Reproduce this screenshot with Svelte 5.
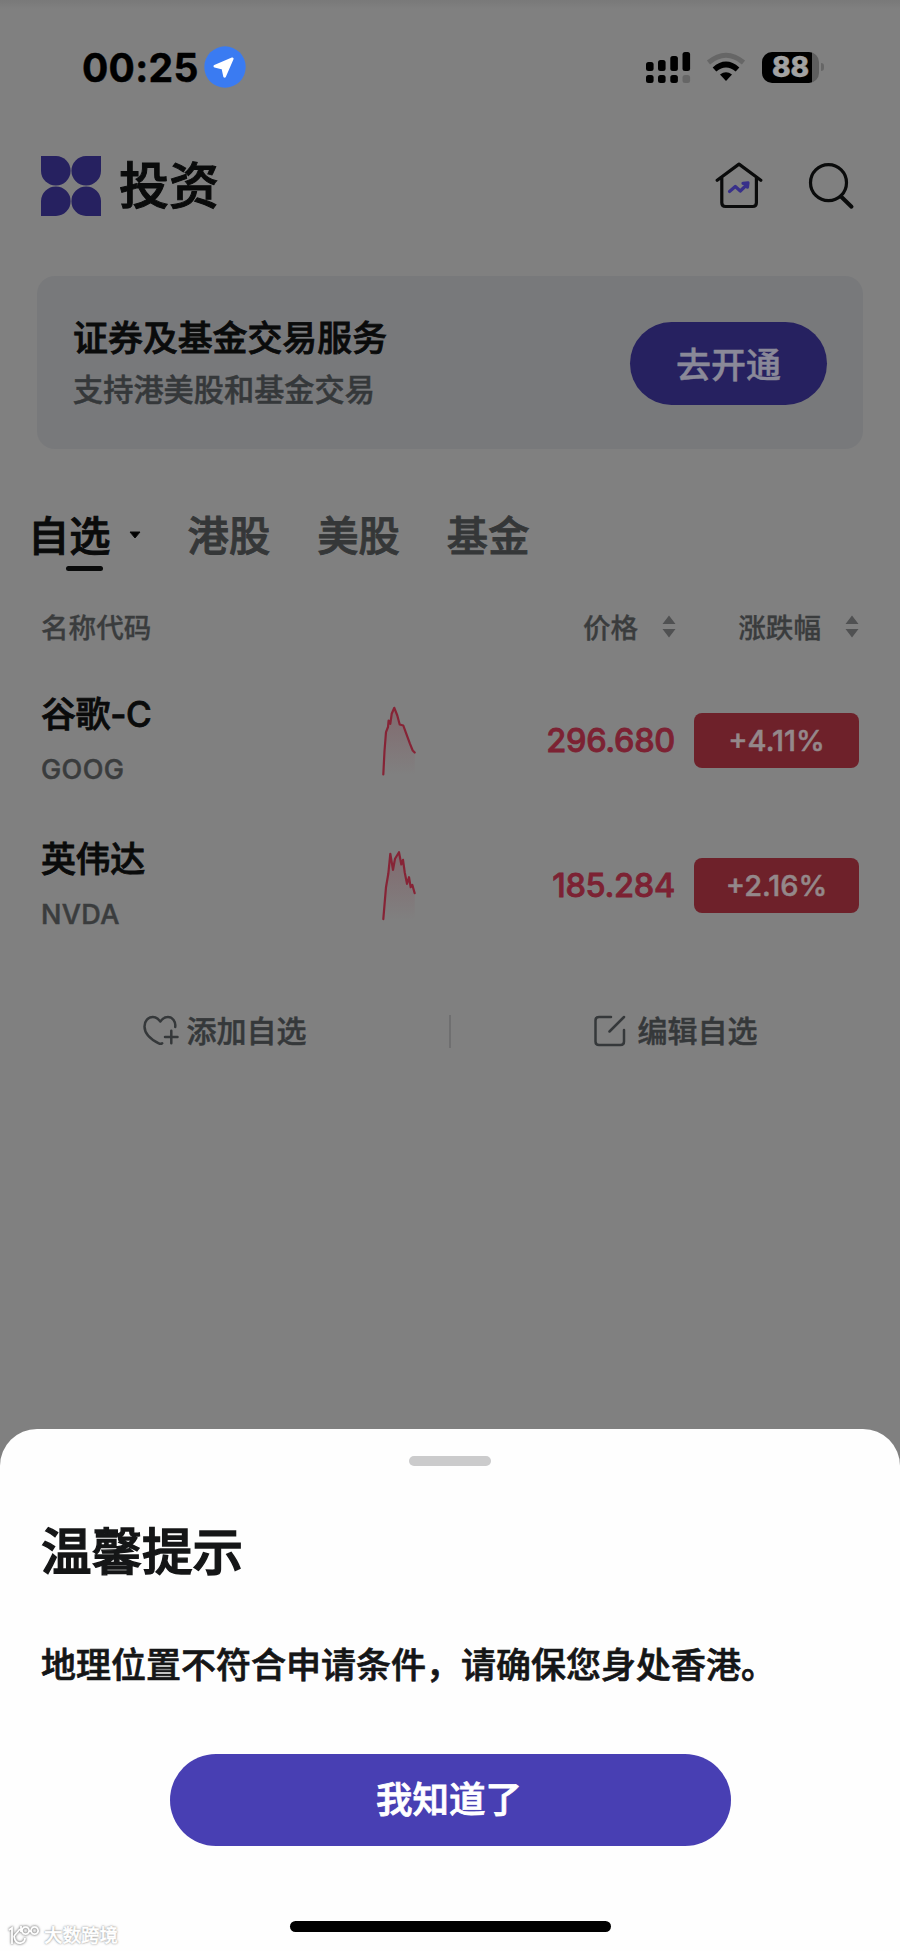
<script lang="ts">
	interface Stock {
		name: string;
		code: string;
		price: string;
		change: string;
		points: string;
	}

	const tabs = ['自选', '港股', '美股', '基金'];

	const stocks: Stock[] = [
		{
			name: '谷歌-C',
			code: 'GOOG',
			price: '296.680',
			change: '+4.11%',
			points:
				'3.3,73.5 4.5,50 6,31.2 8,26 8.6,19.5 10.3,22.8 11.7,12.8 14.3,6.8 17.3,14.5 19.7,23.5 23.3,24.5 25.7,31.2 30,42.8 32.7,49.5 34.7,51.5'
		},
		{
			name: '英伟达',
			code: 'NVDA',
			price: '185.284',
			change: '+2.16%',
			points:
				'3.3,73.2 6,41.2 8.3,27.8 10.3,7.8 13,23.8 15,12.8 19,6.2 21.3,18.5 23,13.8 24.7,26.2 27,37.8 29,31.2 30.7,41.2 32.3,38.8 34.7,47.2'
		}
	];

	let activeTab = $state('自选');
	let sheetOpen = $state(true);

	const closeSheet = () => {
		sheetOpen = false;
	};
</script>

{#snippet sorter()}
	<svg class="sorter" width="14" height="23" viewBox="0 0 14 23">
		<path d="M7 0.5L13.5 9H0.5z M7 22.5L13.5 14H0.5z" />
	</svg>
{/snippet}

<div class="phone">
	<div class="status-bar">
		<span class="time">00:25</span>
		<svg class="location" width="42" height="42" viewBox="0 0 42 42">
			<circle cx="21" cy="21" r="20.7" fill="#3a7bf2" />
			<path
				d="M10.8 20.3L28.3 12.8L20.6 30.4L18.8 22.3z"
				fill="#fff"
				stroke="#fff"
				stroke-width="2.6"
				stroke-linejoin="round"
			/>
		</svg>
		<div class="indicators">
			<svg width="46" height="34" viewBox="0 0 46 34">
				<rect x="1" y="12" width="7.6" height="9" rx="2.5" />
				<rect x="13" y="10" width="7.6" height="11" rx="2.5" />
				<rect x="25.3" y="6" width="7.6" height="15" rx="2.5" />
				<rect x="37.5" y="2" width="7.6" height="19" rx="2.5" />
				<rect x="1" y="25" width="7.6" height="8" rx="2.5" />
				<rect x="13" y="25" width="7.6" height="8" rx="2.5" />
				<rect x="25.3" y="25" width="7.6" height="8" rx="2.5" />
				<rect x="37.5" y="25" width="7.6" height="8" rx="2.5" fill="#666" />
			</svg>
			<svg class="wifi" width="40" height="30" viewBox="0 0 40 30">
				<path d="M2.5 10.5Q20 -4 37.5 10.5" fill="none" stroke="#666" stroke-width="5" />
				<path d="M8.5 17.5Q20 7.5 31.5 17.5" fill="none" stroke="#000" stroke-width="5.6" />
				<path d="M14 22.6Q20 17.8 26 22.6L20 29z" />
			</svg>
			<div class="battery"><span>88</span></div>
			<div class="battery-tip"></div>
		</div>
	</div>

	<header class="header">
		<svg class="logo" width="60" height="60" viewBox="0 0 60 60">
			<path d="M0 0H15A14.8 14.8 0 1 1 0 15z" />
			<path d="M60 0H45A14.8 14.8 0 1 0 60 15z" />
			<path d="M0 60H15A14.8 14.8 0 1 0 0 45z" />
			<path d="M60 60H45A14.8 14.8 0 1 1 60 45z" />
		</svg>
		<h1>投资</h1>
		<svg class="line-icon home" width="48" height="48" viewBox="0 0 48 48">
			<path d="M2.2 18.3L24 2.1L45.8 18.3M6.8 15.5V40.7Q6.8 44.5 10.6 44.5H37.6Q41.4 44.5 41.4 40.7V15.5" />
			<path class="trend" d="M14.5 29.5L20.3 24.5L25.3 29L32 22.5M28 21.3L33 20.8L32.4 25.2" />
		</svg>
		<svg class="line-icon" width="48" height="48" viewBox="0 0 48 48">
			<circle cx="21.5" cy="20.7" r="18" />
			<path d="M34 34.5L44.5 44.7" stroke-width="4" />
		</svg>
	</header>

	<section class="banner">
		<div>
			<h2>证券及基金交易服务</h2>
			<p>支持港美股和基金交易</p>
		</div>
		<button class="open-btn">去开通</button>
	</section>

	<nav class="tabs">
		{#each tabs as tab, i}
			<button class="tab" class:active={tab === activeTab} onclick={() => (activeTab = tab)}>
				{tab}
				{#if i === 0}
					<svg class="caret" width="12" height="8" viewBox="0 0 12 8">
						<path d="M1 1H11L6 7z" stroke="#0a0b0b" stroke-linejoin="round" />
					</svg>
				{/if}
			</button>
		{/each}
	</nav>

	<div class="table-head">
		<span class="col-name">名称代码</span>
		<span class="col-price">价格</span>{@render sorter()}
		<span class="col-change">涨跌幅</span>{@render sorter()}
	</div>

	{#each stocks as stock}
		<div class="stock">
			<div class="stock-name">
				<strong>{stock.name}</strong>
				<span>{stock.code}</span>
			</div>
			<svg class="spark" width="40" height="80" viewBox="0 0 40 80">
				<defs>
					<linearGradient id="fade-{stock.code}" x1="0" y1="0" x2="0" y2="1">
						<stop offset="0" stop-color="#862436" stop-opacity="0.24" />
						<stop offset="1" stop-color="#862436" stop-opacity="0" />
					</linearGradient>
				</defs>
				<polygon points="{stock.points} 34.7,74 3.3,74" fill="url(#fade-{stock.code})" />
				<polyline points={stock.points} />
			</svg>
			<span class="price">{stock.price}</span>
			<span class="change">{stock.change}</span>
		</div>
	{/each}

	<div class="actions">
		<button class="action">
			<svg width="36" height="32" viewBox="0 0 36 32">
				<path
					d="M32.2 12C33 6.5 29.5 2 25 2C21.5 2 19 4 17.3 6.5C15 3.5 12.5 2 9.8 2C5.2 2 1.5 6 1.5 11.5C1.5 19.5 9 25 15.8 28.4Q17.8 29.4 19.2 28.2"
				/>
				<path d="M22 22H34.5M28.3 15.8V28.2" />
			</svg>
			<span>添加自选</span>
		</button>
		<div class="divider"></div>
		<button class="action edit">
			<svg width="32" height="32" viewBox="0 0 32 32">
				<path d="M17 2H5Q1.5 2 1.5 5.5V26.5Q1.5 30 5 30H26.5Q30 30 30 26.5V15M30 2L15.5 16.5" />
			</svg>
			<span>编辑自选</span>
		</button>
	</div>

	{#if sheetOpen}
		<div class="sheet" role="dialog" aria-modal="true">
			<div class="handle"></div>
			<h2>温馨提示</h2>
			<p>地理位置不符合申请条件，请确保您身处香港。</p>
			<button class="confirm" onclick={closeSheet}>我知道了</button>
			<div class="home-indicator"></div>
			<div class="watermark">
				<svg width="34" height="22" viewBox="0 0 34 22">
					<path
						d="M2 6L5 4V20M13 5L7 12M7 12Q8 20 14 19Q18 18 18 14M14 2V8M18.5 3A3.6 3.6 0 1 0 18.6 3M27.5 3A3.6 3.6 0 1 0 27.6 3"
					/>
				</svg>
				<span>大数跨境</span>
			</div>
		</div>
	{/if}
</div>

<style>
	:global(body) {
		margin: 0;
		background: #808080;
	}

	.phone {
		position: relative;
		box-sizing: border-box;
		width: 900px;
		height: 1951px;
		overflow: hidden;
		background: linear-gradient(#797979, #7b7b7b 3px, #808080 9px);
		font-family: Inter, 'Noto Sans CJK SC', sans-serif;
		font-weight: 500;
		color: #0a0b0b;
		-webkit-text-stroke: 0.5px currentColor;
	}

	h1,
	h2,
	p {
		margin: 0;
		font-weight: 500;
	}

	button {
		padding: 0;
		border: none;
		background: none;
		font: inherit;
		color: inherit;
		cursor: pointer;
	}

	svg {
		flex-shrink: 0;
	}

	.status-bar {
		display: flex;
		align-items: center;
		height: 134px;
		padding: 0 76px 0 82px;
		color: #000;
	}

	.time {
		width: 122px;
		font-size: 39px;
		font-weight: 700;
		letter-spacing: 0.3px;
	}

	.indicators {
		display: flex;
		align-items: center;
		margin-left: auto;
	}

	.wifi {
		margin: 0 16px 0 15px;
	}

	.battery {
		display: flex;
		align-items: center;
		justify-content: center;
		width: 57px;
		height: 31px;
		border-radius: 10px;
		background: linear-gradient(90deg, #000 50px, #5e5e5e 50px);
	}

	.battery span {
		font-size: 28px;
		font-weight: 800;
		line-height: 31px;
		color: #a2a2a2;
	}

	.battery-tip {
		width: 3px;
		height: 8px;
		margin-left: 2px;
		border-radius: 0 4px 4px 0;
		background: #666;
	}

	.header {
		display: flex;
		align-items: center;
		height: 103px;
		padding: 0 45px 0 41px;
	}

	.logo {
		margin-right: 18px;
		fill: #262160;
	}

	.header h1 {
		flex: 1;
		font-size: 50px;
		line-height: 60px;
		-webkit-text-stroke-width: 1px;
	}

	.line-icon {
		fill: none;
		stroke: #0a0b0b;
		stroke-width: 3.2;
		stroke-linecap: round;
		stroke-linejoin: round;
	}

	.home {
		margin-right: 44px;
	}

	.trend {
		stroke: #38308a;
	}

	.banner {
		display: flex;
		align-items: center;
		justify-content: space-between;
		box-sizing: border-box;
		height: 173px;
		margin: 39px 37px 0;
		padding: 2px 36px 0 36px;
		border-radius: 18px;
		background: #78797b;
	}

	.banner h2 {
		font-size: 34.9px;
		line-height: 52px;
		-webkit-text-stroke-width: 0.8px;
	}

	.banner p {
		font-size: 30.2px;
		line-height: 52px;
		color: #35383a;
	}

	.open-btn {
		width: 197px;
		height: 83px;
		padding-bottom: 3px;
		border-radius: 42px;
		background: #262160;
		font-size: 35px;
		color: #8a8998;
	}

	.tabs {
		display: flex;
		gap: 47px;
		height: 72px;
		margin-top: 50px;
		padding-left: 28px;
	}

	.tab {
		position: relative;
		display: flex;
		align-items: center;
		padding-bottom: 4px;
		font-size: 41.3px;
		color: #353738;
		-webkit-text-stroke-width: 0.9px;
	}

	.tab.active {
		color: #0a0b0b;
	}

	.tab.active::after {
		content: '';
		position: absolute;
		bottom: 0;
		left: 50%;
		width: 37px;
		height: 5px;
		margin-left: -18px;
		border-radius: 3px;
		background: #0a0b0b;
	}

	.caret {
		margin: 4px 0 0 18px;
	}

	.table-head {
		display: flex;
		align-items: center;
		height: 74px;
		margin: 18px 0 5px;
		padding: 0 41px 0 41px;
		font-size: 27.6px;
		color: #3a3c3d;
		-webkit-text-stroke-width: 0.3px;
	}

	.col-name {
		flex: 1;
	}

	.sorter {
		margin-left: 24px;
		fill: #505152;
	}

	.col-change {
		margin-left: 62px;
	}

	.stock {
		display: grid;
		grid-template-columns: 339px 40px 1fr 165px;
		align-items: center;
		height: 145px;
		margin: 0 41px 0 41px;
	}

	.stock-name {
		display: flex;
		flex-direction: column;
		padding-top: 2px;
		line-height: 55px;
	}

	.stock-name strong {
		font-size: 35px;
		font-weight: 500;
		letter-spacing: -0.4px;
		-webkit-text-stroke-width: 0.8px;
	}

	.stock-name span {
		font-size: 27px;
		letter-spacing: 0.4px;
		color: #3a3c3d;
	}

	.spark polyline {
		fill: none;
		stroke: #862436;
		stroke-width: 2.2;
		stroke-linejoin: round;
		stroke-linecap: round;
	}

	.price {
		padding-right: 19px;
		text-align: right;
		font-size: 32.5px;
		letter-spacing: -0.3px;
		color: #7c2233;
		-webkit-text-stroke-width: 0.8px;
	}

	.change {
		height: 55px;
		border-radius: 8px;
		background: #6e212a;
		text-align: center;
		font-size: 29px;
		line-height: 55px;
		color: #94888a;
	}

	.actions {
		display: flex;
		align-items: center;
		height: 100px;
		margin-top: 23px;
		font-size: 30px;
		color: #35383a;
	}

	.action {
		display: flex;
		flex: 1;
		align-items: center;
		justify-content: center;
		gap: 8px;
	}

	.action span {
		padding-bottom: 4px;
	}

	.action svg {
		fill: none;
		stroke: #35383a;
		stroke-width: 2.5;
		stroke-linecap: round;
		stroke-linejoin: round;
	}

	.action.edit {
		gap: 12px;
	}

	.divider {
		width: 2px;
		height: 33px;
		background: #6f6f70;
	}

	.sheet {
		position: absolute;
		right: 0;
		bottom: 0;
		left: 0;
		display: flex;
		flex-direction: column;
		box-sizing: border-box;
		height: 522px;
		padding: 27px 41px 0;
		border-radius: 37px 37px 0 0;
		background: #fefefe;
		color: #151617;
	}

	.handle {
		width: 82px;
		height: 10px;
		margin: 0 auto;
		border-radius: 5px;
		background: #cbcbcc;
	}

	.sheet h2 {
		margin-top: 51px;
		font-size: 50.5px;
		line-height: 70px;
		-webkit-text-stroke-width: 1.4px;
	}

	.sheet p {
		margin-top: 53px;
		font-size: 35px;
		line-height: 50px;
		-webkit-text-stroke-width: 0.7px;
	}

	.confirm {
		width: 561px;
		height: 92px;
		margin: 64px auto 0;
		padding: 0 2px 5px 0;
		border-radius: 46px;
		background: #483fb3;
		font-size: 36.5px;
		color: #fff;
		-webkit-text-stroke-width: 0.8px;
	}

	.home-indicator {
		width: 321px;
		height: 11px;
		margin: 75px auto 0;
		border-radius: 6px;
		background: #000;
	}

	/* overlaid on the bottom-left corner of the screen */
	.watermark {
		position: absolute;
		bottom: 4px;
		left: 7px;
		display: flex;
		align-items: center;
		gap: 3px;
		font-size: 18.5px;
		line-height: 24px;
		color: #fff;
		text-shadow:
			0 0 1px #888,
			0 0 2px #999,
			0 0 3px #bbb;
	}

	.watermark svg {
		fill: none;
		stroke: #fff;
		stroke-width: 1.8;
		filter: drop-shadow(0 0 1px #888) drop-shadow(0 0 1px #bbb);
	}
</style>
